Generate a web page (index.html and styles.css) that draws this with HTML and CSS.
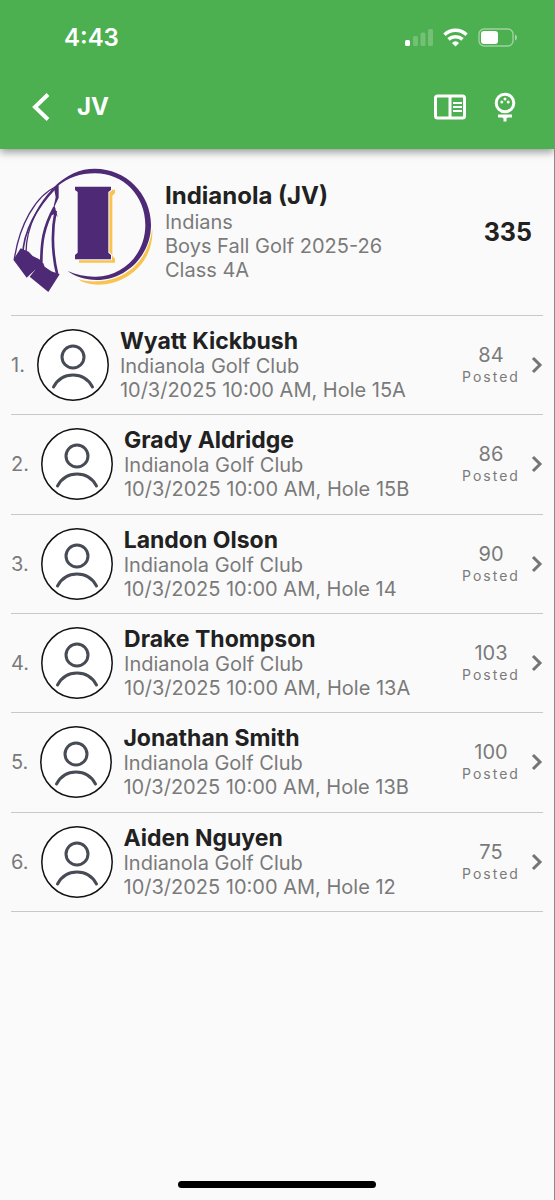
FILE: index.html
```html
<!DOCTYPE html>
<html lang="en">
<head>
  <meta charset="UTF-8">
  <meta name="viewport" content="width=device-width, initial-scale=1.0">
  <title>JV</title>
  <link rel="stylesheet" href="styles.css">
</head>
<body>
  <svg class="symbols" aria-hidden="true">
    <symbol id="person" viewBox="0 0 72 72">
      <circle cx="36" cy="36" r="35.200" fill="#fff" stroke="#111" stroke-width="1.500"/>
      <circle cx="36" cy="28" r="11"/>
      <path d="M16.500 58C25 42 47 42 55.500 58"/>
    </symbol>
    <symbol id="chevron" viewBox="0 0 12 18">
      <path d="M2 2l7 7-7 7"/>
    </symbol>
  </svg>

  <header class="top">
    <div class="status">
      <span class="time">4:43</span>
      <svg class="status-icons" viewBox="0 0 112 20" aria-hidden="true">
        <rect x="0" y="12" width="5" height="6" rx="1.500" fill="#fff"/>
        <g fill="#fff" opacity=".22">
          <rect x="8" y="8" width="5" height="10" rx="1.500"/>
          <rect x="15.500" y="4.500" width="5" height="13.500" rx="1.500"/>
          <rect x="23" y="1" width="5" height="17" rx="1.500"/>
        </g>
        <g fill="none" stroke="#fff" stroke-width="3.600">
          <path d="M39.500 6.700a16 16 0 0 1 22 0"/>
          <path d="M43.500 11.400a10.500 10.500 0 0 1 14 0"/>
        </g>
        <path d="M50.500 18.500l-3.600-3.600a5.500 5.500 0 0 1 7.200 0z" fill="#fff"/>
        <rect x="74" y="1" width="34" height="17" rx="5" fill="none" stroke="#fff" stroke-opacity=".45" stroke-width="1.400"/>
        <rect x="76" y="3" width="17" height="13" rx="3" fill="#fff"/>
        <path d="M110 6.500c2.600 1 2.600 5 0 6z" fill="#fff" opacity=".5"/>
      </svg>
    </div>
    <nav class="bar">
      <a class="back" href="#" aria-label="Back">
        <svg width="18" height="28" viewBox="0 0 18 28"><path d="M16 1.500L3 14l13 12.500"/></svg>
      </a>
      <h1 class="title">JV</h1>
      <button class="action" type="button" aria-label="Scorecard">
        <svg width="32" height="26" viewBox="0 0 32 26">
          <rect x="1.500" y="2" width="29" height="22" rx="2"/>
          <path d="M16 2v22"/>
          <path class="thin" d="M19 9h9M19 13h9M19 17h9"/>
        </svg>
      </button>
      <button class="action" type="button" aria-label="Course">
        <svg width="22" height="30" viewBox="0 0 22 30">
          <circle cx="11" cy="11" r="8.800"/>
          <path class="solid" d="M4 22.500h14v3h-4q-1.500 0-1.500 1.500v2.500h-3V27q0-1.500-1.500-1.500H4z"/>
          <circle class="solid" cx="7.800" cy="10" r="1.500"/>
          <circle class="solid" cx="14.200" cy="10" r="1.500"/>
          <circle class="solid" cx="11" cy="7" r="1.500"/>
        </svg>
      </button>
    </nav>
  </header>

  <main class="content">
    <section class="team">
      <svg class="logo" viewBox="0 22 459 414" role="img" aria-label="Indianola logo">
        <!-- ring with gold shadow -->
        <path fill="#f8c34e" d="M457 220C462 320 380 387 295 387C270 387 250 382 235 371C260 378 280 378 295 377C370 374 442 325 457 220z"/>
        <path fill="#4e2a76" d="M160 96C200 56 240 39 285 39C378 39 453 114 453 208C453 300 378 373 290 373C255 373 225 362 203 346C230 358 262 364 288 363C370 362 436 295 436 208C436 120 370 53 285 53C240 53 205 66 172 92z"/>
        <!-- letter -->
        <path fill="#f8c34e" d="M237 102h108v10l-8 8v181l8 8v12H237z"/>
        <path fill="#4e2a76" stroke="#fafafa" stroke-width="6" paint-order="stroke" d="M225 93h108v10l-8 6v182l8 7v13H225v-13l8-7V109l-8-6z"/>
        <!-- feathers -->
        <path fill="#4e2a76" d="M40 312l22-34 24 10 12 13 20 10 12 12 4 10 20 14 25 9-34 53-56-46 18-22-27 25z"/>
        <g fill="none" stroke="#4e2a76">
          <path d="M172 91C105 120 58 210 43 310" stroke-width="4"/>
          <path d="M168 95C115 150 68 225 68 305" stroke-width="5"/>
          <path d="M160 100C125 135 78 205 78 292" stroke-width="4"/>
          <path d="M163 155C130 215 124 260 124 320" stroke-width="8"/>
          <path d="M167 165C152 240 158 300 172 358" stroke-width="8"/>
        </g>
        <path fill="#4e2a76" d="M162 96l14-8v38l-12 26 9 32-8-10-10 5 12-54z"/>
      </svg>
      <div class="team-info">
        <h2 class="team-name">Indianola (JV)</h2>
        <p>Indians</p>
        <p>Boys Fall Golf 2025-26</p>
        <p>Class 4A</p>
      </div>
      <strong class="total">335</strong>
    </section>

    <ol class="players">
      <li>
        <a class="player" href="#">
          <span class="rank">1.</span>
          <svg class="avatar"><use href="#person"/></svg>
          <span class="info"><b class="name">Wyatt Kickbush</b><span>Indianola Golf Club</span><span>10/3/2025 10:00 AM, Hole 15A</span></span>
          <span class="score">84<small>Posted</small></span>
          <svg class="chevron"><use href="#chevron"/></svg>
        </a>
      </li>
      <li>
        <a class="player" href="#">
          <span class="rank">2.</span>
          <svg class="avatar"><use href="#person"/></svg>
          <span class="info"><b class="name">Grady Aldridge</b><span>Indianola Golf Club</span><span>10/3/2025 10:00 AM, Hole 15B</span></span>
          <span class="score">86<small>Posted</small></span>
          <svg class="chevron"><use href="#chevron"/></svg>
        </a>
      </li>
      <li>
        <a class="player" href="#">
          <span class="rank">3.</span>
          <svg class="avatar"><use href="#person"/></svg>
          <span class="info"><b class="name">Landon Olson</b><span>Indianola Golf Club</span><span>10/3/2025 10:00 AM, Hole 14</span></span>
          <span class="score">90<small>Posted</small></span>
          <svg class="chevron"><use href="#chevron"/></svg>
        </a>
      </li>
      <li>
        <a class="player" href="#">
          <span class="rank">4.</span>
          <svg class="avatar"><use href="#person"/></svg>
          <span class="info"><b class="name">Drake Thompson</b><span>Indianola Golf Club</span><span>10/3/2025 10:00 AM, Hole 13A</span></span>
          <span class="score">103<small>Posted</small></span>
          <svg class="chevron"><use href="#chevron"/></svg>
        </a>
      </li>
      <li>
        <a class="player" href="#">
          <span class="rank">5.</span>
          <svg class="avatar"><use href="#person"/></svg>
          <span class="info"><b class="name">Jonathan Smith</b><span>Indianola Golf Club</span><span>10/3/2025 10:00 AM, Hole 13B</span></span>
          <span class="score">100<small>Posted</small></span>
          <svg class="chevron"><use href="#chevron"/></svg>
        </a>
      </li>
      <li>
        <a class="player" href="#">
          <span class="rank">6.</span>
          <svg class="avatar"><use href="#person"/></svg>
          <span class="info"><b class="name">Aiden Nguyen</b><span>Indianola Golf Club</span><span>10/3/2025 10:00 AM, Hole 12</span></span>
          <span class="score">75<small>Posted</small></span>
          <svg class="chevron"><use href="#chevron"/></svg>
        </a>
      </li>
    </ol>
  </main>

  <div class="home-indicator"></div>
</body>
</html>
```
FILE: styles.css
```css
* {
  box-sizing: border-box;
}
body {
  display: flex;
  flex-direction: column;
  min-height: 100vh;
  margin: 0;
  border-right: 1px solid #8a8a8a;
  background-color: #fafafa;
  color: #7a7a7a;
  font: 20px/24px Inter, "Liberation Sans", sans-serif;
}
h1, h2, p, ol {
  margin: 0;
  padding: 0;
}
a {
  color: inherit;
  text-decoration: none;
}
.symbols {
  position: absolute;
  width: 0;
  height: 0;
}

/* header */
.top {
  background-color: #4caf50;
  color: #fff;
  box-shadow: 0 3px 8px rgba(0, 0, 0, .4);
}
.status {
  display: flex;
  align-items: center;
  justify-content: space-between;
  height: 75px;
  padding: 0 37px 0 64px;
}
.time {
  font-size: 24px;
  font-weight: 600;
}
.status-icons {
  width: 112px;
  height: 20px;
}
.bar {
  display: flex;
  align-items: center;
  height: 74px;
  padding: 0 38px 10px 32px;
}
.bar svg {
  display: block;
  fill: none;
  stroke: #fff;
  stroke-width: 3;
}
.bar .back svg {
  stroke-width: 4;
}
.bar .thin {
  stroke-width: 2;
}
.bar .solid {
  fill: #fff;
  stroke: none;
}
.title {
  flex: 1;
  margin-left: 27px;
  font-size: 24px;
  font-weight: 700;
}
.action {
  padding: 0;
  border: 0;
  background: none;
}
.action + .action {
  margin-left: 28px;
}

/* team summary */
.team {
  display: flex;
  align-items: center;
  height: 166px;
  padding-right: 22px;
}
.logo {
  flex: none;
  width: 153px;
  height: 138px;
}
.team-info {
  flex: 1;
  margin-left: 12px;
}
.team-name {
  color: #212121;
  font-size: 24px;
  font-weight: 700;
  line-height: 28px;
}
.total {
  color: #212121;
  font-size: 25px;
  font-weight: 700;
}

/* players */
.players {
  display: grid;
  grid-auto-rows: 1fr;
  min-height: 597px;
  margin: 0 11px;
  border-top: 1px solid #c8c8c8;
  list-style: none;
}
.players li {
  border-bottom: 1px solid #c8c8c8;
}
.player {
  display: flex;
  align-items: center;
  height: 100%;
}
.avatar {
  flex: none;
  width: 72px;
  height: 72px;
  margin: 0 11px 0 12px;
  fill: none;
  stroke: #464b55;
  stroke-width: 3;
  stroke-linecap: round;
}
.info {
  flex: 1;
}
.info span,
.score small {
  display: block;
}
.name {
  display: block;
  color: #212121;
  font-size: 23px;
  font-weight: 700;
  line-height: 26px;
}
.score {
  width: 60px;
  text-align: center;
}
.score small {
  font-size: 14px;
  line-height: 20px;
  letter-spacing: 2px;
}
.chevron {
  width: 12px;
  height: 18px;
  margin-left: 10px;
  fill: none;
  stroke: #757575;
  stroke-width: 3;
}

.home-indicator {
  width: 198px;
  height: 7px;
  margin: auto auto 12px;
  border-radius: 4px;
  background-color: #000;
}
```
